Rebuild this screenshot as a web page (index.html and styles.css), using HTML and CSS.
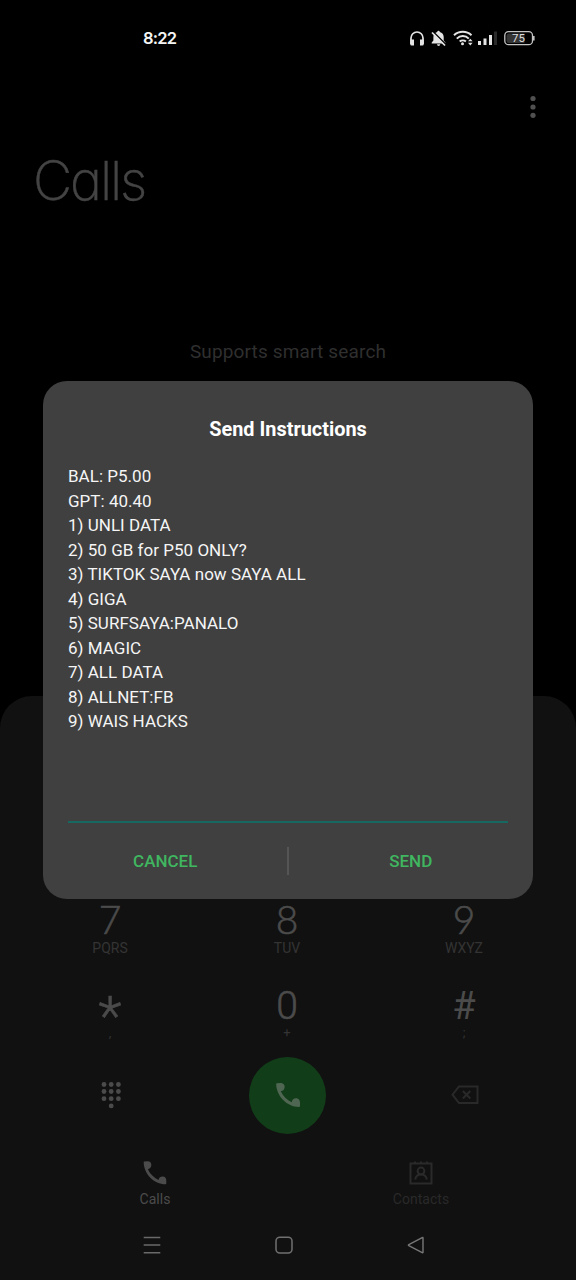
FILE: index.html
```html
<!DOCTYPE html>
<html lang="en">
<head>
<meta charset="utf-8">
<title>Calls</title>
<link rel="stylesheet" href="styles.css">
</head>
<body>
<div class="screen">
  <header class="status">
    <span class="clock">8:22</span>
    <svg class="status-icons" width="130" height="22" viewBox="408 27 130 22" fill="none">
      <path d="M411 44v-6a6 6 0 0 1 12 0v6" stroke="#e4e4e4" stroke-width="1.7"/>
      <path d="M410.2 39.5h3.800v6h-2.300a1.500 1.500 0 0 1-1.500-1.500zM420 39.500h3.800V44a1.500 1.500 0 0 1-1.500 1.500H420z" fill="#e4e4e4"/>
      <path d="M438.5 30.8a1.3 1.3 0 0 1 1.300 1.200c2.400.7 3.900 2.500 3.900 5v3.500l1.700 2v1h-13.700v-1l1.700-2V37c0-2.500 1.500-4.300 3.800-5a1.300 1.300 0 0 1 1.300-1.200zM437 44.300h3.200a1.600 1.600 0 0 1-3.200 0z" fill="#e4e4e4"/>
      <path d="M433.200 31.700l13 13" stroke="#000" stroke-width="1.600"/>
      <path d="M432 32.500l13 13" stroke="#e4e4e4" stroke-width="1.700"/>
      <path d="M454 35.300a12.800 12.800 0 0 1 17.500 0M456.800 38.600a8.500 8.500 0 0 1 12 0M459.700 41.600a4.600 4.600 0 0 1 6.200 0" stroke="#e4e4e4" stroke-width="2"/>
      <circle cx="462.500" cy="43.800" r="1.500" fill="#e4e4e4"/>
      <path d="M468 41.300l2.300-2.600 2.300 2.600zM468 42.800l2.300 2.600 2.300-2.600z" fill="#e4e4e4"/>
      <path d="M478 41h3v4h-3zM483.500 38.500h3V45h-3zM489 35h3v10h-3z" fill="#e4e4e4"/>
      <path d="M494 31.500h3V45h-3z" fill="#292929"/>
      <rect x="504.800" y="31.700" width="27.700" height="13" rx="3.800" stroke="#c4c4c4" stroke-width="1.300"/>
      <path d="M509 33.500h15.500v9.500H509a2.500 2.500 0 0 1-2.500-2.500V36a2.500 2.500 0 0 1 2.500-2.500z" fill="#353535"/>
      <path d="M533.800 36v4.500" stroke="#c4c4c4" stroke-width="1.600"/>
      <text class="battery" x="518.400" y="42.200" text-anchor="middle">75</text>
    </svg>
  </header>
  <div class="appbar">
    <svg width="8" height="24" viewBox="0 0 8 24" fill="#505050"><circle cx="4" cy="3.500" r="2.600"/><circle cx="4" cy="12" r="2.600"/><circle cx="4" cy="20.300" r="2.600"/></svg>
  </div>
  <h1 class="title">Calls</h1>
  <p class="hint">Supports smart search</p>

  <section class="sheet">
    <div class="keypad">
      <div class="key"><span class="digit">7</span><span class="letters">PQRS</span></div>
      <div class="key"><span class="digit">8</span><span class="letters">TUV</span></div>
      <div class="key"><span class="digit">9</span><span class="letters">WXYZ</span></div>
      <div class="key"><span class="digit star">*</span><span class="letters mark">,</span></div>
      <div class="key"><span class="digit zero">0</span><span class="letters mark">+</span></div>
      <div class="key"><span class="digit hash">#</span><span class="letters mark">;</span></div>
    </div>
    <div class="actions">
      <svg width="22" height="28" viewBox="0 0 22 28" fill="#4b4b4b"><circle cx="4" cy="3.500" r="2.400"/><circle cx="11.200" cy="3.500" r="2.400"/><circle cx="18.400" cy="3.500" r="2.400"/><circle cx="4" cy="10.500" r="2.400"/><circle cx="11.200" cy="10.500" r="2.400"/><circle cx="18.400" cy="10.500" r="2.400"/><circle cx="4" cy="17.700" r="2.400"/><circle cx="11.200" cy="17.700" r="2.400"/><circle cx="18.400" cy="17.700" r="2.400"/><circle cx="11.200" cy="24.900" r="2.400"/></svg>
      <div class="dial">
        <svg width="26" height="26" viewBox="0 0 26 26"><path fill="#4f6652" d="M1.200 2.500Q1 1.300 2 1.300L5.500 1C8.500 1 10 3.200 9.600 5.500 9.300 7.800 7.800 9 5.800 9.200 8 14 12 18 16.700 20.200 17 17.800 18.800 16.300 21 16.300 23.800 16.300 25.200 18.600 25 21V24Q25 25 24 25C12 25 1.500 14 1.200 2.500Z"/></svg>
      </div>
      <svg width="30" height="22" viewBox="0 0 30 22" fill="none" stroke="#292929" stroke-width="2"><path d="M9 2.500h18.500v16.500H9L2.500 10.700z"/><path d="M12.800 7l7.500 7.500M20.300 7l-7.500 7.500"/></svg>
    </div>
    <nav class="tabs">
      <div class="tab tab-on">
        <svg width="26" height="26" viewBox="0 0 26 26"><path fill="#4b4b4b" d="M1.700 2.500Q1.500 1.700 2.300 1.600L5.500 1.300C8.300 1.300 9.700 3.400 9.300 5.600 9 7.800 7.600 8.900 5.900 9.200 8 14 12 17.700 16.500 19.900 16.900 17.700 18.500 16.500 20.600 16.500 23.200 16.500 24.500 18.600 24.300 20.900V23.500Q24.300 24.300 23.500 24.300C12 24.300 2 14 1.700 2.500Z"/></svg>
        <span>Calls</span>
      </div>
      <div class="tab">
        <svg width="26" height="26" viewBox="0 0 26 26" fill="none" stroke="#2a2a2a" stroke-width="2"><path d="M2.500 3.500h21v20h-21zM7 1.500v2M13 1.500v2M19 1.500v2"/><circle cx="13" cy="11" r="3.400"/><path d="M7.200 19.500c.5-3.200 2.500-5 5.800-5s5.300 1.800 5.800 5"/></svg>
        <span>Contacts</span>
      </div>
    </nav>
    <div class="sysnav">
      <svg width="20" height="20" viewBox="0 0 20 20" stroke="#6a6a6a" stroke-width="1.500"><path d="M1.700 2.500h16.600M1.700 10h16.600M1.700 17.700h16.600"/></svg>
      <svg width="20" height="20" viewBox="0 0 20 20" fill="none" stroke="#707070" stroke-width="1.500"><rect x="2" y="2.200" width="16" height="15.800" rx="3.800"/></svg>
      <svg width="20" height="20" viewBox="0 0 20 20" fill="none" stroke="#777" stroke-width="1.400" stroke-linejoin="round"><path d="M17 3v14.200q0 .8-.8.400L2.800 10.700q-.8-.5 0-1L16.200 2.600q.8-.4.800.4z"/></svg>
    </div>
  </section>

  <div class="dialog" role="dialog">
    <h2 class="dialog-title">Send Instructions</h2>
    <div class="message">BAL: P5.00<br>GPT: 40.40<br>1) UNLI DATA<br>2) 50 GB for P50 ONLY?<br>3) TIKTOK SAYA now SAYA ALL<br>4) GIGA<br>5) SURFSAYA:PANALO<br>6) MAGIC<br>7) ALL DATA<br>8) ALLNET:FB<br>9) WAIS HACKS</div>
    <div class="field"></div>
    <div class="buttons">
      <span class="button">CANCEL</span>
      <span class="divider"></span>
      <span class="button">SEND</span>
    </div>
  </div>
</div>
</body>
</html>
```
FILE: styles.css
```css
* { box-sizing: border-box; }
body { margin: 0; background: #000; font-family: Roboto, "Liberation Sans", sans-serif; }
svg { display: block; flex: none; }
.screen { position: relative; display: flex; flex-direction: column; width: 576px; height: 1280px; overflow: hidden; background: #000; }

.status { display: flex; align-items: center; justify-content: space-between; height: 76px; padding: 0 38px 0 143px; }
.clock { font: 600 16.500px Inter, sans-serif; letter-spacing: -0.800px; color: #f4f4f4; }
.battery { font: 400 11.500px Roboto, sans-serif; fill: #ddd; }
.appbar { display: flex; align-items: center; justify-content: flex-end; height: 62px; padding-right: 39px; }
.title { margin: 8px 0 0 33px; height: 70px; font: 250 54px/70px Inter, sans-serif; font-feature-settings: "cv11"; letter-spacing: -2.100px; color: #444; -webkit-text-stroke: 0.500px #444; }
.hint { margin: 124px 0 0; font-size: 19px; line-height: 24px; letter-spacing: 0.150px; text-align: center; color: #2f2f2f; }

.sheet { display: flex; flex-direction: column; height: 584px; margin-top: auto; padding-top: 199px; border-radius: 32px 32px 0 0; background: #111; }
.keypad { display: grid; grid-template-columns: repeat(3, 177px); grid-auto-rows: 84px; justify-content: center; margin-right: 2px; }
.key { display: flex; flex-direction: column; align-items: center; }
.digit { height: 45px; font-family: Lato, sans-serif; font-size: 39px; line-height: 48px; font-weight: 300; color: #4b4b4b; -webkit-text-stroke: 0.600px #4b4b4b; }
.zero { font-family: Roboto, sans-serif; line-height: 54px; }
.star { font-family: Roboto, sans-serif; font-size: 54px; line-height: 74px; }
.hash { font-family: Roboto, sans-serif; font-weight: 400; font-size: 38px; line-height: 54px; -webkit-text-stroke: 0; }
.letters { font-size: 14px; line-height: 17px; color: #343434; }
.mark { font-size: 13px; line-height: 18px; }
.actions { display: grid; grid-template-columns: repeat(3, 177px); justify-content: center; place-items: center; height: 78px; margin: -7px 0 0; padding-right: 1px; }
.dial { display: grid; place-items: center; width: 77px; height: 77px; border-radius: 50%; background: #123d19; }
.tabs { display: grid; grid-template-columns: 266px 266px; justify-content: center; height: 76px; padding-top: 26px; }
.tab { display: flex; flex-direction: column; align-items: center; gap: 5px; font-size: 14px; line-height: 16px; letter-spacing: 0.050px; color: #292929; }
.tab-on { color: #4b4b4b; }
.sysnav { display: flex; justify-content: space-between; padding: 25px 150px 0 142px; }

.dialog { position: absolute; left: 43px; top: 381px; display: flex; flex-direction: column; width: 490px; height: 518px; padding: 35px 25px 0; border-radius: 24px; background: #404040; }
.dialog-title { margin: 0; font-size: 19.900px; line-height: 28px; font-weight: 700; text-align: center; color: #fff; }
.message { margin-top: 20px; height: 270px; font-size: 17px; line-height: 24.550px; letter-spacing: 0.020px; color: #f5f5f5; }
.field { height: 89px; border-bottom: 2px solid #176860; }
.buttons { display: flex; align-items: center; height: 76px; }
.button { flex: 1; font-size: 17px; font-weight: 500; text-align: center; color: #3fb65f; }
.button:first-child { padding-right: 24px; }
.button:last-child { padding-left: 25px; }
.divider { width: 2px; height: 28px; background: #555; }
```
